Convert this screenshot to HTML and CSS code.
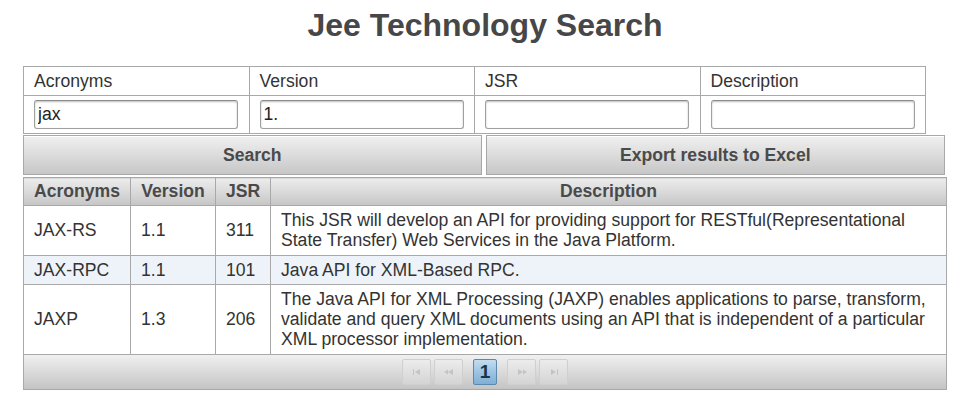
FILE: index.html
```html
<!DOCTYPE html>
<html>
<head>
<meta charset="utf-8">
<link rel="stylesheet" href="styles.css">
</head>
<body>
<div class="page">
  <h1 class="title">Jee Technology Search</h1>
  <table class="filters">
    <tr>
      <th>Acronyms</th><th>Version</th><th>JSR</th><th>Description</th>
    </tr>
    <tr>
      <td><input class="field" type="text" value="jax"></td>
      <td><input class="field" type="text" value="1."></td>
      <td><input class="field" type="text" value=""></td>
      <td><input class="field" type="text" value=""></td>
    </tr>
  </table>
  <div class="actions">
    <button class="btn btn-search">Search</button>
    <button class="btn btn-export">Export results to Excel</button>
  </div>
  <table class="results">
    <thead>
      <tr>
        <th class="c-acr">Acronyms</th>
        <th class="c-ver">Version</th>
        <th class="c-jsr">JSR</th>
        <th class="c-desc">Description</th>
      </tr>
    </thead>
    <tbody>
      <tr>
        <td>JAX-RS</td><td>1.1</td><td class="num">311</td>
        <td>This JSR will develop an API for providing support for RESTful(Representational State Transfer) Web Services in the Java Platform.</td>
      </tr>
      <tr class="alt">
        <td>JAX-RPC</td><td>1.1</td><td class="num">101</td>
        <td>Java API for XML-Based RPC.</td>
      </tr>
      <tr>
        <td>JAXP</td><td>1.3</td><td class="num">206</td>
        <td>The Java API for XML Processing (JAXP) enables applications to parse, transform, validate and query XML documents using an API that is independent of a particular XML processor implementation.</td>
      </tr>
    </tbody>
  </table>
  <div class="pager">
    <span class="pg pg-off"><svg width="10" height="6" viewBox="0 0 10 6"><rect x="1" y="0" width="1" height="6" fill="#c4c4c4"/><polygon points="3,3 8,0 8,6" fill="#c4c4c4"/></svg></span>
    <span class="pg pg-off"><svg width="12" height="6" viewBox="0 0 12 6"><polygon points="1,3 5,0.5 5,5.5" fill="#c4c4c4"/><polygon points="5,3 10,0 10,6" fill="#c4c4c4"/></svg></span>
    <span class="pg pg-active">1</span>
    <span class="pg pg-off"><svg width="12" height="6" viewBox="0 0 12 6"><polygon points="2,0 7,3 2,6" fill="#c4c4c4"/><polygon points="7,0.5 11,3 7,5.5" fill="#c4c4c4"/></svg></span>
    <span class="pg pg-off"><svg width="10" height="6" viewBox="0 0 10 6"><polygon points="2,0 7,3 2,6" fill="#c4c4c4"/><rect x="8" y="0" width="1" height="6" fill="#c4c4c4"/></svg></span>
  </div>
</div>
</body>
</html>
```
FILE: styles.css
```css
html, body {
  margin: 0;
  padding: 0;
  background: #ffffff;
}
body {
  font-family: "Liberation Sans", Arial, sans-serif;
  color: #333333;
  font-size: 17.6px;
}
.page {
  width: 924px;
  margin-left: 23px;
  padding-top: 7px;
}
.title {
  margin: 0 0 22px 0;
  font-size: 32px;
  line-height: 37px;
  font-weight: bold;
  color: #474747;
  text-align: center;
}
.filters {
  width: 903px;
  border-collapse: collapse;
  table-layout: fixed;
  font-size: 17.6px;
}
.filters th,
.filters td {
  border: 1px solid #a8a8a8;
  text-align: left;
  font-weight: normal;
  padding: 4px 10px;
  line-height: 20px;
  color: #333333;
}
.filters td {
  height: 29px;
}
.field {
  box-sizing: border-box;
  display: block;
  width: 204px;
  height: 29px;
  margin: 0;
  padding: 2px 3px;
  border: 1px solid #a0a0a0;
  border-top-color: #8a8a8a;
  border-radius: 3px;
  box-shadow: inset 0 1px 2px rgba(0,0,0,0.25);
  font-family: "Liberation Sans", Arial, sans-serif;
  font-size: 17.6px;
  color: #222222;
  background: #ffffff;
  outline: none;
}
.actions {
  display: flex;
  gap: 4px;
  margin-top: 1px;
  width: 922px;
}
.btn {
  box-sizing: border-box;
  height: 40px;
  border: 1px solid #a8a8a8;
  border-radius: 0;
  background: linear-gradient(to bottom, #f0f0f0 0%, #dcdcdc 50%, #c6c6c6 100%);
  font-family: "Liberation Sans", Arial, sans-serif;
  font-size: 17.6px;
  font-weight: bold;
  color: #4a4a4a;
  box-shadow: inset 0 1px 0 #ffffff;
  padding: 0;
}
.btn-search {
  width: 459px;
}
.btn-export {
  width: 460px;
}
.results {
  width: 924px;
  margin-top: 2px;
  border-collapse: collapse;
  table-layout: fixed;
  font-size: 17.6px;
}
.results th {
  border: 1px solid #a8a8a8;
  background: linear-gradient(to bottom, #ececec 0%, #d6d6d6 60%, #c6c6c6 100%);
  font-weight: bold;
  color: #4a4a4a;
  padding: 3px 10px 4px 10px;
  line-height: 20px;
  text-align: center;
  white-space: nowrap;
}
.results .c-acr { width: 86px; }
.results .c-ver { width: 64px; }
.results .c-jsr { width: 34px; }
.results td {
  border: 1px solid #a8a8a8;
  padding: 4px 10px 4px 10px;
  line-height: 20.3px;
  color: #333333;
  vertical-align: middle;
}
.results td.num {
  text-align: left;
}
.results tr.alt td {
  background: #eef3f9;
}
.pager {
  box-sizing: border-box;
  width: 924px;
  height: 35px;
  border: 1px solid #a8a8a8;
  border-top: none;
  background: linear-gradient(to bottom, #f0f0f0 0%, #d8d8d8 55%, #c4c4c4 100%);
  display: flex;
  justify-content: center;
  align-items: center;
  gap: 3px;
}
.pg {
  box-sizing: border-box;
  height: 26px;
  display: flex;
  align-items: center;
  justify-content: center;
}
.pg-off {
  width: 29px;
  border: 1px solid #cfcfcf;
  border-radius: 2px;
  background: linear-gradient(to bottom, #ececec, #d4d4d4);
}
.pg-active {
  width: 24px;
  margin: 0 7px;
  border: 1px solid #5b88ad;
  border-radius: 2px;
  background: linear-gradient(to bottom, #c4dcef 0%, #9cc4e4 50%, #80afd6 100%);
  font-weight: bold;
  font-size: 19px;
  color: #1e3346;
}
```
